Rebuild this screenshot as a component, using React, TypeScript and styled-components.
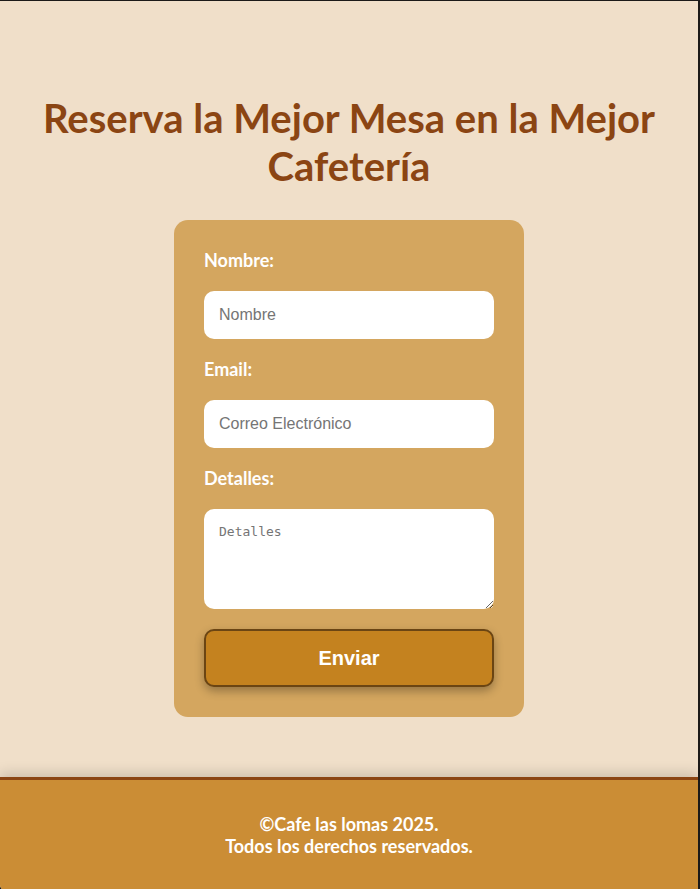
import React from "react";
import styled, { createGlobalStyle } from "styled-components";

const Global = createGlobalStyle`
  html, body { margin: 0; padding: 0; background: #1c1a18; }
  body { font-family: Lato, "Noto Sans", sans-serif; }
  * { box-sizing: border-box; }
`;

const Frame = styled.div`
  margin-top: 1px;
  margin-right: 2px;
  min-height: 888px;
  display: flex;
  flex-direction: column;
  background: #f0dfc9;
  border-bottom-left-radius: 5px;
  overflow: hidden;
`;

const Main = styled.main`
  flex: 1;
  display: flex;
  flex-direction: column;
  align-items: center;
  padding: 93px 20px 60px;
`;

const Title = styled.h1`
  margin: 0 0 30px;
  font-family: Lato, sans-serif;
  font-weight: 700;
  font-size: 40px;
  line-height: 48px;
  color: #8b4513;
  text-align: center;
`;

const Card = styled.form`
  width: 350px;
  background: #d4a65f;
  border-radius: 14px;
  padding: 30px 30px 30px;
  display: flex;
  flex-direction: column;
`;

const Label = styled.label`
  font-family: Lato, sans-serif;
  font-weight: 700;
  font-size: 18px;
  line-height: 20px;
  color: #ffffff;
  margin-bottom: 21px;
`;

const Input = styled.input`
  width: 100%;
  height: 48px;
  border: none;
  border-radius: 10px;
  background: #fff;
  padding: 0 15px;
  font-family: "Liberation Sans", Arial, sans-serif;
  font-size: 16px;
  margin-bottom: 20px;
  outline: none;
  &::placeholder { color: #757575; }
`;

const TextArea = styled.textarea`
  width: 100%;
  height: 100px;
  border: none;
  border-radius: 10px;
  background: #fff;
  padding: 15px;
  font-family: "DejaVu Sans Mono", monospace;
  font-size: 13px;
  margin-bottom: 20px;
  outline: none;
  resize: vertical;
  display: block;
  &::placeholder { color: #757575; }
`;

const Button = styled.button`
  width: 100%;
  height: 58px;
  background: #c4821f;
  border: 2px solid #6b4513;
  border-radius: 10px;
  color: #fff;
  font-family: "Liberation Sans", Arial, sans-serif;
  font-weight: 700;
  font-size: 20px;
  box-shadow: 0 4px 10px rgba(0, 0, 0, 0.3);
  cursor: pointer;
`;

const Footer = styled.footer`
  background: #cb8d35;
  border-top: 3px solid #8b4513;
  box-shadow: 0 -4px 12px rgba(0, 0, 0, 0.15);
  padding: 33px 20px 33px;
  text-align: center;
  color: #fff;
  font-family: Lato, sans-serif;
  font-weight: 700;
  font-size: 18px;
  line-height: 22px;
`;

const FooterText = styled.p`
  margin: 0;
`;

export default function App() {
  return (
    <>
      <Global />
      <Frame>
        <Main>
          <Title>
            Reserva la Mejor Mesa en la Mejor
            <br />
            Cafetería
          </Title>
          <Card onSubmit={(e) => e.preventDefault()}>
            <Label htmlFor="nombre">Nombre:</Label>
            <Input id="nombre" type="text" placeholder="Nombre" />
            <Label htmlFor="email">Email:</Label>
            <Input id="email" type="email" placeholder="Correo Electrónico" />
            <Label htmlFor="detalles">Detalles:</Label>
            <TextArea id="detalles" placeholder="Detalles" />
            <Button type="submit">Enviar</Button>
          </Card>
        </Main>
        <Footer>
          <FooterText>©Cafe las lomas 2025.</FooterText>
          <FooterText>Todos los derechos reservados.</FooterText>
        </Footer>
      </Frame>
    </>
  );
}
